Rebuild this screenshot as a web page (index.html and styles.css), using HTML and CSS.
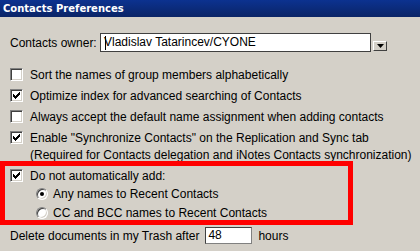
FILE: index.html
```html
<!DOCTYPE html>
<html lang="en">
<head>
  <meta charset="UTF-8">
  <title>Contacts Preferences</title>
  <link rel="stylesheet" href="styles.css">
</head>
<body>
  <div class="window">
    <div class="titlebar">Contacts Preferences</div>
    <div class="content">
      <div class="owner-row">
        <span class="label">Contacts owner:</span>
        <span class="field"><span class="caret"></span>Vladislav Tatarincev/CYONE</span>
        <span class="drop"><svg width="7" height="4" viewBox="0 0 7 4"><path d="M0 0h7L3.5 4z" fill="#000"/></svg></span>
      </div>

      <div class="option"><span class="check"></span>Sort the names of group members alphabetically</div>
      <div class="option"><span class="check on"></span>Optimize index for advanced searching of Contacts</div>
      <div class="option"><span class="check"></span>Always accept the default name assignment when adding contacts</div>
      <div class="option"><span class="check on"></span>Enable "Synchronize Contacts" on the Replication and Sync tab</div>
      <div class="note">(Required for Contacts delegation and iNotes Contacts synchronization)</div>

      <div class="option first-group"><span class="check on"></span>Do not automatically add:</div>
      <div class="radio-row"><span class="radio on"></span>Any names to Recent Contacts</div>
      <div class="radio-row"><span class="radio"></span>CC and BCC names to Recent Contacts</div>

      <div class="trash-row">
        Delete documents in my Trash after
        <span class="small-field">48</span>
        hours
      </div>
    </div>
    <div class="highlight"></div>
  </div>
</body>
</html>
```

FILE: styles.css
```css
body {
  margin: 0;
  background: #d4d0c8;
  font-family: "Liberation Sans", Arial, sans-serif;
  font-size: 12px;
  color: #000;
}

.window {
  position: relative;
  width: 420px;
  height: 251px;
  overflow: hidden;
}

.titlebar {
  height: 17px;
  line-height: 17px;
  padding-left: 3px;
  background: linear-gradient(#0c3290, #0a2466);
  color: #fff;
  font-family: "DejaVu Sans", sans-serif;
  font-weight: bold;
  font-size: 10px;
}

.content {
  padding: 16px 0 0 10px;
}

.owner-row {
  display: flex;
  align-items: center;
  height: 19px;
}

.owner-row .label {
  width: 90px;
}

.field {
  position: relative;
  width: 271px;
  height: 19px;
  box-sizing: border-box;
  border: 1px solid #404040;
  background: #fff;
  padding-left: 3px;
  line-height: 17px;
}

.caret {
  position: absolute;
  left: 4px;
  top: 2px;
  width: 1px;
  height: 14px;
  background: #000;
}

.drop {
  display: flex;
  align-items: center;
  justify-content: center;
  width: 14px;
  height: 10px;
  margin: 6px 0 0 2px;
  box-sizing: border-box;
  background: #d4d0c8;
  border: 1px solid;
  border-color: #fff #404040 #404040 #fff;
}

.option {
  display: flex;
  align-items: center;
  height: 21px;
}

.owner-row + .option {
  margin-top: 12px;
}

.check {
  width: 13px;
  height: 13px;
  box-sizing: border-box;
  margin-right: 7px;
  background: #fff;
  border: 1px solid;
  border-color: #808080 #fff #fff #808080;
  box-shadow: inset 1px 1px #404040, inset -1px -1px #d4d0c8;
}

.check.on {
  background: #fff url("data:image/svg+xml,%3Csvg xmlns='http://www.w3.org/2000/svg' width='13' height='13' shape-rendering='crispEdges'%3E%3Cpath d='M3 5h1v1h1v1h1v-1h1v-1h1v-1h1v-1h1v3h-1v1h-1v1h-1v1h-1v1h-1v-1h-1v-1h-1z' fill='%23000'/%3E%3C/svg%3E") no-repeat -1px -1px;
}

.note {
  height: 16px;
  line-height: 15px;
  padding-left: 20px;
}

.option.first-group {
  height: 17px;
  margin-top: 3px;
}

.radio-row {
  display: flex;
  align-items: center;
  height: 19px;
  padding-left: 26px;
}

.radio {
  width: 12px;
  height: 12px;
  box-sizing: border-box;
  margin-right: 5px;
  border-radius: 50%;
  background: #fff;
  border: 1px solid;
  border-color: #808080 #fff #fff #808080;
  box-shadow: inset 1px 1px #404040, inset -1px -1px #d4d0c8;
  position: relative;
}

.radio.on::after {
  content: "";
  position: absolute;
  left: 3px;
  top: 3px;
  width: 4px;
  height: 4px;
  border-radius: 50%;
  background: #000;
}

.trash-row {
  display: flex;
  align-items: center;
  gap: 6px;
  margin-top: 5px;
  height: 17px;
}

.small-field {
  width: 47px;
  height: 17px;
  box-sizing: border-box;
  border: 1px solid;
  border-color: #404040 #808080 #808080 #404040;
  background: #fff;
  padding-left: 2px;
  line-height: 15px;
}

.highlight {
  position: absolute;
  left: 0;
  top: 161px;
  width: 353px;
  height: 64px;
  box-sizing: border-box;
  border: 5px solid #ff0000;
}
```
